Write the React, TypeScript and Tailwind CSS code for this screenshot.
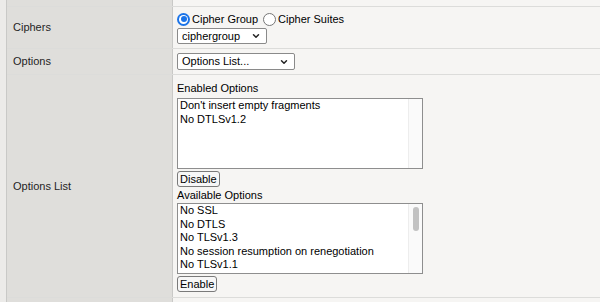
import { ChevronDown } from "lucide-react";

const enabledOptions = ["Don't insert empty fragments", "No DTLSv1.2"];

const availableOptions = [
  "No SSL",
  "No DTLS",
  "No TLSv1.3",
  "No session resumption on renegotiation",
  "No TLSv1.1",
];

function Radio({ checked }: { checked?: boolean }) {
  if (checked) {
    return (
      <span className="flex size-[13px] items-center justify-center rounded-full bg-[#1a73e8] shrink-0">
        <span className="flex size-[9px] items-center justify-center rounded-full bg-white">
          <span className="size-[6px] rounded-full bg-[#1a73e8]" />
        </span>
      </span>
    );
  }
  return <span className="size-[13px] rounded-full border border-[#767676] bg-white shrink-0" />;
}

function Select({ label, width, height }: { label: string; width: string; height: string }) {
  return (
    <div
      className={`${width} ${height} flex items-center justify-between rounded-[2px] border border-[#8a8a8a] bg-white pl-[4px] pr-[5px] text-[11px] text-black`}
    >
      <span>{label}</span>
      <ChevronDown size={10} strokeWidth={3.5} className="text-[#222]" />
    </div>
  );
}

function ListBox({ items, thumb }: { items: string[]; thumb?: boolean }) {
  return (
    <div className="flex h-[71px] w-[246px] border border-[#8e8e8e] bg-white">
      <div className="flex-1 pl-[2px] text-[11px] leading-[13.5px] text-black">
        {items.map((item) => (
          <div key={item} className="whitespace-nowrap">
            {item}
          </div>
        ))}
      </div>
      <div className="w-[14px] border-l border-[#ededed] bg-[#fafafa] pt-[3px] flex justify-center">
        {thumb && <div className="h-[24px] w-[6px] rounded-full bg-[#c2c2c2]" />}
      </div>
    </div>
  );
}

function Button({ label }: { label: string }) {
  return (
    <button className="flex h-[16px] items-center rounded-[3px] border border-[#7a7a7a] bg-[#f7f7f7] px-[2px] text-[11px] leading-none text-black">
      {label}
    </button>
  );
}

function Row({
  label,
  height,
  children,
}: {
  label?: string;
  height: string;
  children?: React.ReactNode;
}) {
  return (
    <div className={`flex ${height} border-b border-[#dcdcda]`}>
      <div className="flex w-[166px] shrink-0 items-center border-r border-[#c9c9c7] bg-[#dfdedb] pl-[6px] text-[11px] text-[#1f1f1f]">
        {label}
      </div>
      <div className="flex-1 bg-[#f6f5f3] pl-[4px]">{children}</div>
    </div>
  );
}

export default function App() {
  return (
    <div
      className="flex h-[302px] w-[600px] overflow-hidden bg-[#f6f5f3]"
      style={{ fontFamily: '"Liberation Sans", Arial, sans-serif' }}
    >
      <div className="w-[7px] shrink-0 border-r border-[#c9c9c7] bg-[#ecebe9]" />
      <div className="flex flex-1 flex-col">
        <Row height="h-[7px]" />

        <Row label="Ciphers" height="h-[42px]">
          <div className="flex flex-col pt-[4px]">
            <div className="flex h-[16px] items-center gap-[2px] text-[11px] text-black">
              <Radio checked />
              <span className="mr-[3px]">Cipher Group</span>
              <Radio />
              <span>Cipher Suites</span>
            </div>
            <div className="mt-[1px]">
              <Select label="ciphergroup" width="w-[90px]" height="h-[16px]" />
            </div>
          </div>
        </Row>

        <Row label="Options" height="h-[26px]">
          <div className="pt-[4px]">
            <Select label="Options List..." width="w-[118px]" height="h-[17px]" />
          </div>
        </Row>

        <Row label="Options List" height="h-[223px]">
          <div className="flex flex-col items-start pt-[6px]">
            <div className="text-[11px] leading-[14px] text-black">Enabled Options</div>
            <div className="mt-[3px]">
              <ListBox items={enabledOptions} />
            </div>
            <div className="mt-[2px]">
              <Button label="Disable" />
            </div>
            <div className="mt-[1px] text-[11px] leading-[14px] text-black">Available Options</div>
            <div className="mt-[1px]">
              <ListBox items={availableOptions} thumb />
            </div>
            <div className="mt-[2px]">
              <Button label="Enable" />
            </div>
          </div>
        </Row>

        <div className="flex flex-1">
          <div className="w-[166px] border-r border-[#c9c9c7] bg-[#dfdedb]" />
          <div className="flex-1 bg-[#f6f5f3]" />
        </div>
      </div>
    </div>
  );
}
